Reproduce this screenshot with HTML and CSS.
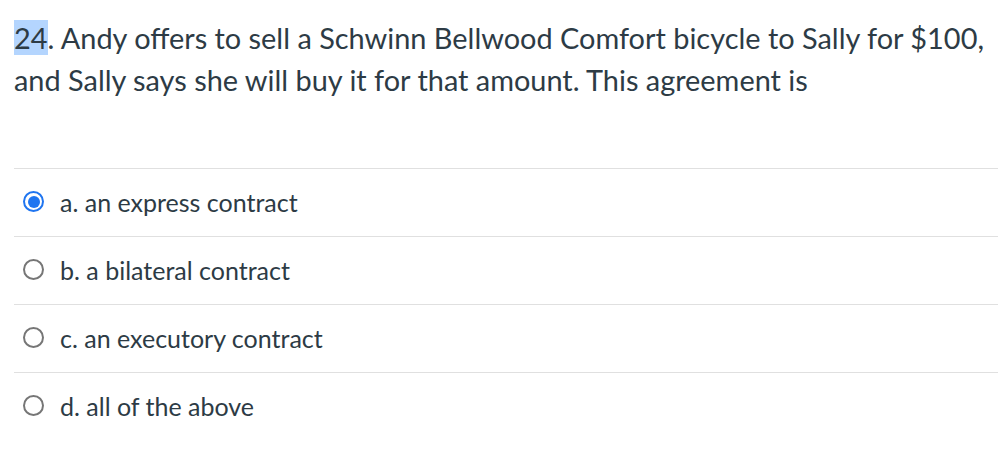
FILE: index.html
```html
<!DOCTYPE html>
<html>
<head>
<meta charset="utf-8">
<link rel="stylesheet" href="styles.css">
</head>
<body>
<div class="question">
  <p class="question-text"><span class="hl">24</span>. Andy offers to sell a Schwinn Bellwood Comfort bicycle to Sally for $100, and Sally says she will buy it for that amount. This agreement is</p>
  <div class="answers">
    <div class="answer"><span class="radio checked"></span><span class="label">a. an express contract</span></div>
    <div class="answer"><span class="radio"></span><span class="label">b. a bilateral contract</span></div>
    <div class="answer"><span class="radio"></span><span class="label">c. an executory contract</span></div>
    <div class="answer"><span class="radio"></span><span class="label">d. all of the above</span></div>
  </div>
</div>
</body>
</html>
```
FILE: styles.css
```css
html, body {
  margin: 0;
  padding: 0;
  background: #ffffff;
}
body {
  font-family: Lato, "Liberation Sans", sans-serif;
  color: #2d3b45;
}
.question {
  padding: 17px 4px 0 14px;
}
.question-text {
  margin: 0;
  font-size: 28.9px;
  line-height: 42px;
  width: 984px;
}
.hl {
  background: #b4d5fe;
}
.answers {
  margin-top: 67px;
}
.answer {
  border-top: 1px solid #e0e0e0;
  height: 68px;
  box-sizing: border-box;
  padding-bottom: 2px;
  display: flex;
  align-items: center;
  padding-left: 9px;
  font-size: 25px;
}
.radio {
  box-sizing: border-box;
  width: 21px;
  height: 21px;
  border-radius: 50%;
  border: 2px solid #767676;
  margin-right: 16px;
  flex: none;
  position: relative;
}
.radio.checked {
  border: 2px solid #1f75f0;
}
.radio.checked::after {
  content: "";
  position: absolute;
  left: 2.5px;
  top: 2.5px;
  width: 12px;
  height: 12px;
  border-radius: 50%;
  background: #1f75f0;
}
.label {
  line-height: 30px;
}
```
